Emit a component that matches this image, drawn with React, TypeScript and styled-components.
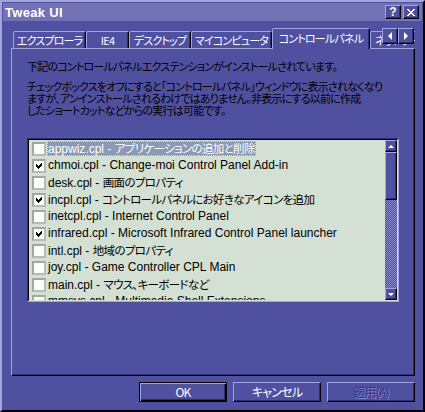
import React from "react";
import styled, { createGlobalStyle, css } from "styled-components";

const C = {
  face: "#5050a0",
  title: "#7272b4",
  light: "#a4a4dc",
  hi: "#8888cc",
  dark: "#2c2c70",
  black: "#000000",
  list: "#d3e0d3",
  sel: "#8a9ab4",
  disabled: "#36368a",
};

const FONT = `"Liberation Sans", "Noto Sans CJK JP", sans-serif`;

const Global = createGlobalStyle`
  html, body { margin: 0; padding: 0; background: ${C.face}; }
  body { font-family: ${FONT}; font-feature-settings: "palt"; font-size: 12px; }
  * { box-sizing: border-box; }
`;

const jp = css`
  font-family: "Noto Sans CJK JP", sans-serif;
  font-feature-settings: "palt";
  font-size: 11px;
  letter-spacing: -0.8px;
`;

const bevel = css`
  border-style: solid;
  border-width: 1px;
  border-color: ${C.light} ${C.black} ${C.black} ${C.light};
  box-shadow: inset -1px -1px 0 ${C.dark};
`;

const Window = styled.div`
  width: 425px;
  height: 412px;
  display: flex;
  flex-direction: column;
  background: ${C.face};
  border-style: solid;
  border-width: 2px;
  border-color: ${C.light} ${C.black} ${C.black} ${C.light};
  padding: 1px;
`;

const TitleBar = styled.div`
  height: 18px;
  flex: none;
  display: flex;
  align-items: center;
  justify-content: space-between;
  background: ${C.title};
  padding: 0 3px 0 2px;
`;

const Title = styled.span`
  color: #fff;
  font-family: "Liberation Sans", sans-serif;
  font-weight: bold;
  font-size: 13px;
  letter-spacing: 0.3px;
`;

const CaptionButtons = styled.div`
  display: flex;
  gap: 2px;
`;

const CaptionButton = styled.div`
  width: 16px;
  height: 14px;
  background: ${C.face};
  ${bevel};
  display: flex;
  align-items: center;
  justify-content: center;
  color: #fff;
  font-family: "Liberation Sans", sans-serif;
  font-weight: bold;
  font-size: 12px;
  line-height: 1;
`;

const Body = styled.div`
  flex: 1;
  display: flex;
  flex-direction: column;
  padding: 7px 7px 7px 8px;
`;

const TabStrip = styled.div`
  position: relative;
  z-index: 1;
  height: 21px;
  margin-bottom: -1px;
  flex: none;
  overflow: hidden;
`;

const Tabs = styled.div`
  display: flex;
  align-items: flex-end;
  height: 100%;
  padding-left: 2px;
`;

const Tab = styled.div<{ $w: number; $active?: boolean; $edge?: boolean }>`
  ${jp};
  flex: none;
  width: ${(p) => p.$w}px;
  height: ${(p) => (p.$active ? 21 : 17)}px;
  margin-bottom: ${(p) => (p.$active ? 0 : 1)}px;
  background: ${C.face};
  border-style: solid;
  border-width: 1px 1px 0 1px;
  border-color: ${C.light} ${C.black} transparent ${C.light};
  border-top-left-radius: 2px;
  border-top-right-radius: 2px;
  box-shadow: inset -1px 0 0 ${C.dark};
  color: #fff;
  display: flex;
  align-items: ${(p) => (p.$active ? "flex-start" : "center")};
  justify-content: ${(p) => (p.$edge ? "flex-start" : "center")};
  padding-top: ${(p) => (p.$active ? 2 : 0)}px;
  padding-left: ${(p) => (p.$edge ? 4 : 0)}px;
  line-height: 14px;
  white-space: nowrap;
  overflow: hidden;
`;

const TabScroller = styled.div`
  position: absolute;
  top: 0;
  right: 1px;
  display: flex;
`;

const ArrowButton = styled.div`
  width: 16px;
  height: 16px;
  background: ${C.face};
  ${bevel};
  display: flex;
  align-items: center;
  justify-content: center;
`;

const Panel = styled.div`
  height: 328px;
  flex: none;
  display: flex;
  flex-direction: column;
  border-style: solid;
  border-width: 1px;
  border-color: ${C.light} ${C.black} ${C.black} ${C.light};
  box-shadow: inset -1px -1px 0 ${C.dark};
  padding: 11px 15px 0 15px;
`;

const Intro = styled.p`
  ${jp};
  margin: 0;
  line-height: 12px;
  color: #000;
  white-space: nowrap;
`;

const Note = styled.p`
  ${jp};
  margin: 8px 0 0 0;
  line-height: 12px;
  color: #000;
  white-space: nowrap;
`;

const ListBox = styled.div`
  margin-top: 22px;
  width: 372px;
  height: 164px;
  border-style: solid;
  border-width: 1px;
  border-color: ${C.dark} ${C.light} ${C.light} ${C.dark};
`;

const ListInner = styled.div`
  height: 100%;
  display: flex;
  border-style: solid;
  border-width: 1px;
  border-color: ${C.black} ${C.list} ${C.list} ${C.black};
  background: ${C.list};
`;

const Rows = styled.div`
  flex: 1;
  overflow: hidden;
`;

const Row = styled.div`
  height: 17px;
  display: flex;
  align-items: center;
  padding-left: 3px;
`;

const Check = styled.div`
  width: 14px;
  height: 14px;
  flex: none;
  background: #fff;
  border-style: solid;
  border-width: 2px;
  border-color: #a0a8a0 #b4bcb4 #b4bcb4 #a0a8a0;
  display: flex;
  align-items: center;
  justify-content: center;
`;

const Label = styled.span<{ $selected?: boolean }>`
  margin-left: 1px;
  height: 15px;
  line-height: 15px;
  padding: 0 1px;
  white-space: nowrap;
  color: ${(p) => (p.$selected ? "#fff" : "#000")};
  background: ${(p) => (p.$selected ? C.sel : "transparent")};
  outline: ${(p) => (p.$selected ? `1px dotted ${C.list}` : "none")};
  outline-offset: -1px;
`;

const JpText = styled.span`
  ${jp};
  font-size: 11.5px;
  letter-spacing: -0.65px;
`;

const ScrollBar = styled.div`
  width: 12px;
  flex: none;
  display: flex;
  flex-direction: column;
`;

const ScrollButton = styled.div`
  height: 12px;
  flex: none;
  background: ${C.face};
  ${bevel};
  display: flex;
  align-items: center;
  justify-content: center;
`;

const Thumb = styled.div`
  height: 48px;
  flex: none;
  background: ${C.face};
  ${bevel};
`;

const Track = styled.div`
  flex: 1;
  background-color: ${C.face};
  background-image: repeating-conic-gradient(${C.hi} 0 25%, ${C.face} 0 50%);
  background-size: 2px 2px;
`;

const ButtonRow = styled.div`
  margin-top: 6px;
  height: 20px;
  display: flex;
  justify-content: flex-end;
  gap: 6px;
`;

const Button = styled.div<{ $default?: boolean; $disabled?: boolean }>`
  ${jp};
  font-size: 12px;
  width: 88px;
  height: 20px;
  background: ${C.face};
  display: flex;
  align-items: center;
  justify-content: center;
  color: ${(p) => (p.$disabled ? C.disabled : "#fff")};
  text-shadow: ${(p) => (p.$disabled ? `1px 1px 0 ${C.hi}` : "none")};
  border-style: solid;
  border-width: 1px;
  border-color: ${(p) =>
    p.$default ? C.black : `${C.light} ${C.black} ${C.black} ${C.light}`};
  box-shadow: ${(p) =>
    p.$default
      ? `inset 1px 1px 0 ${C.light}, inset -1px -1px 0 ${C.black}, inset -2px -2px 0 ${C.dark}`
      : `inset -1px -1px 0 ${C.dark}`};
  line-height: 14px;
`;

const CheckMark = () => (
  <svg width="7" height="7" viewBox="0 0 7 7" shapeRendering="crispEdges">
    <polygon points="0,2 2,4 6,0 6,3 2,7 0,5" fill="#000" />
  </svg>
);

const Tri = ({ dir }: { dir: "up" | "down" | "left" | "right" }) => {
  const pts =
    dir === "up"
      ? "0,3 3,0 6,3"
      : dir === "down"
      ? "0,0 6,0 3,3"
      : dir === "left"
      ? "4,0 4,8 0,4"
      : "0,0 0,8 4,4";
  const w = dir === "up" || dir === "down" ? 6 : 4;
  const h = dir === "up" || dir === "down" ? 3 : 8;
  return (
    <svg width={w} height={h} viewBox={`0 0 ${w} ${h}`}>
      <polygon points={pts} fill="#fff" />
    </svg>
  );
};

const tabs = [
  { label: "エクスプローラ", w: 73 },
  { label: "IE4", w: 43 },
  { label: "デスクトップ", w: 62 },
  { label: "マイコンピュータ", w: 81 },
  { label: "コントロールパネル", w: 98, active: true },
  { label: "ネットワーク", w: 70, edge: true },
];

const items = [
  { code: "appwiz.cpl", desc: "アプリケーションの追加と削除", jp: true, checked: false, selected: true },
  { code: "chmoi.cpl", desc: "Change-moi Control Panel Add-in", checked: true },
  { code: "desk.cpl", desc: "画面のプロパティ", jp: true, checked: false },
  { code: "incpl.cpl", desc: "コントロールパネルにお好きなアイコンを追加", jp: true, checked: true },
  { code: "inetcpl.cpl", desc: "Internet Control Panel", checked: false },
  { code: "infrared.cpl", desc: "Microsoft Infrared Control Panel launcher", checked: true },
  { code: "intl.cpl", desc: "地域のプロパティ", jp: true, checked: false },
  { code: "joy.cpl", desc: "Game Controller CPL Main", checked: false },
  { code: "main.cpl", desc: "マウス、キーボードなど", jp: true, checked: false },
  { code: "mmsys.cpl", desc: "Multimedia Shell Extensions", checked: false },
];

export default function App() {
  return (
    <>
      <Global />
      <Window>
        <TitleBar>
          <Title>Tweak UI</Title>
          <CaptionButtons>
            <CaptionButton>?</CaptionButton>
            <CaptionButton>
              <svg width="8" height="7" viewBox="0 0 8 7" shapeRendering="crispEdges">
                <path d="M0 0h2l2 2.5 2-2.5h2L5 3.5 8 7H6L4 4.5 2 7H0l3-3.5z" fill="#fff" />
              </svg>
            </CaptionButton>
          </CaptionButtons>
        </TitleBar>
        <Body>
          <TabStrip>
            <Tabs>
              {tabs.map((t) => (
                <Tab key={t.label} $w={t.w} $active={t.active} $edge={t.edge}>
                  {t.label}
                </Tab>
              ))}
            </Tabs>
            <TabScroller>
              <ArrowButton>
                <Tri dir="left" />
              </ArrowButton>
              <ArrowButton>
                <Tri dir="right" />
              </ArrowButton>
            </TabScroller>
          </TabStrip>
          <Panel>
            <Intro>下記のコントロールパネルエクステンションがインストールされています。</Intro>
            <Note>
              チェックボックスをオフにすると「コントロールパネル」ウィンドウに表示されなくなり
              <br />
              ますが、アンインストールされるわけではありません。非表示にする以前に作成
              <br />
              したショートカットなどからの実行は可能です。
            </Note>
            <ListBox>
              <ListInner>
                <Rows>
                  {items.map((it) => (
                    <Row key={it.code}>
                      <Check>{it.checked && <CheckMark />}</Check>
                      <Label $selected={it.selected}>
                        {it.code} -{" "}
                        {it.jp ? <JpText>{it.desc}</JpText> : it.desc}
                      </Label>
                    </Row>
                  ))}
                </Rows>
                <ScrollBar>
                  <ScrollButton>
                    <Tri dir="up" />
                  </ScrollButton>
                  <Thumb />
                  <Track />
                  <ScrollButton>
                    <Tri dir="down" />
                  </ScrollButton>
                </ScrollBar>
              </ListInner>
            </ListBox>
          </Panel>
          <ButtonRow>
            <Button $default>OK</Button>
            <Button>キャンセル</Button>
            <Button $disabled>適用(A)</Button>
          </ButtonRow>
        </Body>
      </Window>
    </>
  );
}
